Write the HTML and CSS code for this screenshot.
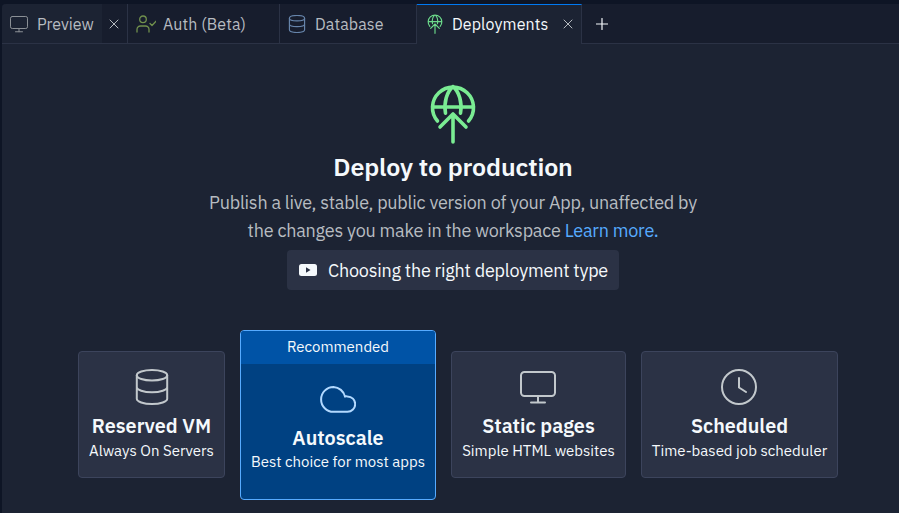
FILE: index.html
```html
<!DOCTYPE html>
<html lang="en">
<head>
<meta charset="utf-8">
<title>Deployments</title>
<link rel="stylesheet" href="styles.css">
</head>
<body>
<svg class="defs" width="0" height="0" aria-hidden="true">
  <symbol id="monitor" viewBox="0 0 36 36"><rect x="1" y="3" width="34" height="24" rx="3.5"/><path d="M18 27v6.500M11 33.500h14"/></symbol>
  <symbol id="database" viewBox="0 0 36 36"><ellipse cx="18" cy="6.3" rx="15.2" ry="5.3"/><path d="M2.8 6.3v23.4c0 2.9 6.8 5.3 15.2 5.3s15.2-2.4 15.2-5.3V6.3M2.8 18c0 2.9 6.8 5.3 15.2 5.3s15.2-2.4 15.2-5.3"/></symbol>
  <symbol id="globe" viewBox="0 0 46 60"><path d="M7.500 37A20.500 20.500 0 1 1 38.500 37M2.500 23h41M15.500 29.200C13.500 18.500 17 7.500 23 2.500c6 5 9.500 16 7.500 26.700M23 58V30M10 43l13-13 13 13"/></symbol>
  <symbol id="close" viewBox="0 0 10 10"><path d="M1 1l8 8M9 1L1 9"/></symbol>
</svg>
<main class="pane">
  <nav class="tabs">
    <div class="tab preview"><span class="label-area"><svg class="icon"><use href="#monitor"/></svg><span>Preview</span></span><svg class="close"><use href="#close"/></svg></div>
    <div class="tab auth"><svg class="icon user" viewBox="0 0 20 18"><circle cx="7" cy="4.300" r="3.300"/><path d="M1 17v-2.500a3.500 3.500 0 0 1 3.500-3.500h5a3.500 3.500 0 0 1 3.500 3.500V17M14 8.500l2 2 4-4.200"/></svg><span>Auth (Beta)</span></div>
    <div class="tab db"><svg class="icon"><use href="#database"/></svg><span>Database</span></div>
    <div class="tab active"><svg class="icon globe-small"><use href="#globe"/></svg><span>Deployments</span><svg class="close"><use href="#close"/></svg></div>
    <div class="tab add"><svg class="plus" viewBox="0 0 12 12"><path d="M6 .5v11M.5 6h11"/></svg></div>
  </nav>
  <section class="intro">
    <svg class="globe"><use href="#globe"/></svg>
    <h1>Deploy to production</h1>
    <p><span>Publish a live, stable, public version of your App, unaffected by</span><br><span>the changes you make in the workspace <a>Learn more.</a></span></p>
    <button><svg class="video" viewBox="0 0 18 12"><rect width="18" height="12" rx="2.500" fill="#f5f9fc"/><path d="M7 3.300v5.400L11.500 6z" fill="#2b3245"/></svg><span>Choosing the right deployment type</span></button>
  </section>
  <section class="cards">
    <article class="card c1"><svg class="card-icon"><use href="#database"/></svg><h2>Reserved VM</h2><div class="desc">Always On Servers</div></article>
    <article class="card c2"><div class="banner">Recommended</div><svg class="card-icon" viewBox="0 0 36 36"><path d="M13.500 6A12.400 12.400 0 0 0 13.500 30.800H27.500A7.700 7.700 0 0 0 27.500 15.400Q26 15.200 25 15.600A12.400 12.400 0 0 0 13.500 6z"/></svg><h2>Autoscale</h2><div class="desc">Best choice for most apps</div></article>
    <article class="card c3"><svg class="card-icon"><use href="#monitor"/></svg><h2>Static pages</h2><div class="desc">Simple HTML websites</div></article>
    <article class="card c4"><svg class="card-icon" viewBox="0 0 36 36"><circle cx="18" cy="18" r="17"/><path d="M18 9v9.500l7 4.500"/></svg><h2>Scheduled</h2><div class="desc">Time-based job scheduler</div></article>
  </section>
</main>
</body>
</html>
```
FILE: styles.css
```css
* { box-sizing: border-box; }
body { margin: 0; height: 513px; padding: 4px 0 0 2px; overflow: hidden; background: #0e1525; color: #f5f9fc; font-family: "IBM Plex Sans", Roboto, sans-serif; }
.defs { position: absolute; }
svg { display: block; flex: none; fill: none; stroke: currentColor; stroke-width: 2; stroke-linecap: round; stroke-linejoin: round; }
span { white-space: nowrap; }
.pane { height: 509px; background: #1c2333; border-radius: 4px 0 0 0; overflow: hidden; }
.tabs { height: 40px; display: flex; background: #171d2d; font-size: 16px; line-height: 20px; color: #b7bcc1; }
.tab { display: flex; align-items: center; border-right: 1px solid #2b3245; border-bottom: 1px solid #2b3245; }
.preview { width: 126px; }
.label-area { width: 100px; height: 39px; padding-left: 7px; display: flex; align-items: center; gap: 8px; background: #1c2333; }
.icon { width: 20px; height: 18px; }
.label-area .icon { color: #8b9096; }
.close { width: 10px; height: 10px; stroke-width: 1; }
.preview .close { margin-left: 7px; }
.auth { width: 152px; padding-left: 8px; gap: 7px; letter-spacing: .1px; }
.user { color: #70904d; stroke-width: 1.3; }
.db { width: 137px; padding-left: 7px; gap: 8px; letter-spacing: .1px; }
.db .icon { color: #6684aa; stroke-width: 2.3; }
.active { width: 165px; padding: 0 0 1px 8px; background: #1c2333; border-top: 1px solid #0079f2; border-bottom: 0; color: #f5f9fc; letter-spacing: .1px; }
.globe-small { width: 20px; height: 20px; color: #6bd98a; stroke-width: 3.5; margin-right: 7px; }
.active .close { margin-left: auto; margin-right: 8px; color: #b7bcc1; }
.add { flex: 1; padding-left: 14px; border-right: 0; color: #f5f9fc; }
.plus { width: 12px; height: 12px; stroke-width: 1.2; }
.intro { width: 902px; display: flex; flex-direction: column; align-items: center; padding-top: 40px; text-align: center; }
.globe { width: 46px; height: 60px; color: #7aec93; stroke-width: 3.6; }
h1, h2, p { margin: 0; }
h1 { font-size: 25px; font-weight: 600; line-height: 32px; margin-top: 7px; letter-spacing: -.13px; }
p { color: #b7bcc1; font-size: 18px; letter-spacing: -.22px; line-height: 28px; margin-top: 6px; }
a { color: #57abff; }
button { width: 332px; height: 40px; border: 0; border-radius: 4px; margin-top: 5px; padding: 0 0 0 12px; display: flex; align-items: center; gap: 11px; background: #2b3245; color: #f5f9fc; font: inherit; font-size: 18px; letter-spacing: -.22px; }
.video { width: 18px; height: 12px; stroke: none; }
.cards { margin: 40px 0 0 76px; display: flex; align-items: flex-start; gap: 15px; height: 170px; }
.card { height: 127px; margin-top: 21px; display: flex; flex-direction: column; align-items: center; background: #2b3245; border: 1px solid #3c445c; border-radius: 4px; padding-top: 17px; overflow: hidden; }
.c1 { width: 147px; }
.c2 { width: 196px; height: 170px; margin-top: 0; padding: 0; background: #004182; border-color: #57abff; }
.c3 { width: 175px; }
.c4 { width: 197px; }
.card-icon { width: 36px; height: 36px; color: #c2c8cc; }
.c3 .card-icon, .c4 .card-icon { margin-right: 1px; }
.c2 .card-icon { color: #b2d9ff; margin-top: 17px; }
.banner { width: 100%; height: 33px; background: #0053a6; text-align: center; font-size: 15px; line-height: 32px; }
h2 { font-size: 19.8px; font-weight: 600; line-height: 24px; margin-top: 9px; white-space: nowrap; }
.desc { font-size: 15px; line-height: 20px; margin-top: 3px; white-space: nowrap; }
.c2 .desc { margin-top: 2px; }
```
